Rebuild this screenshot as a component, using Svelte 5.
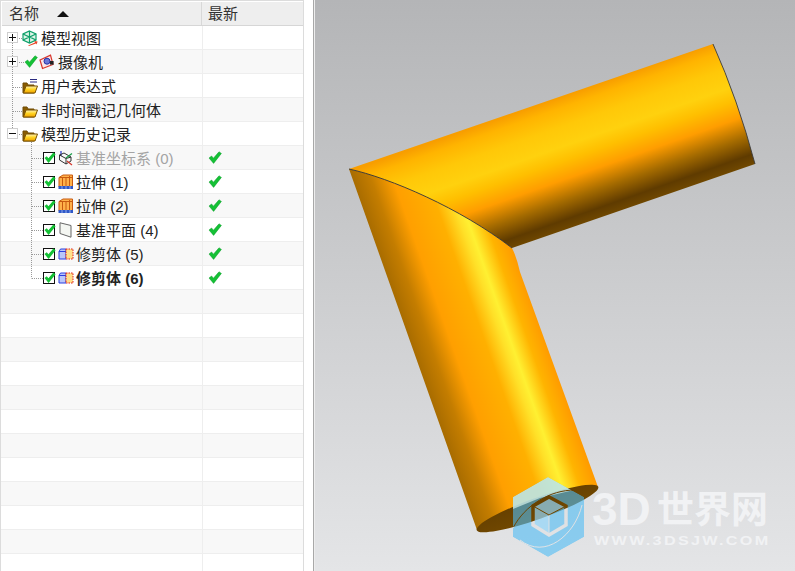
<script>
  const rows = [
    { label: '模型视图', exp: '+', icon: 'cube' },
    { label: '摄像机', exp: '+', icon: 'camera', tick: true },
    { label: '用户表达式', icon: 'folderlist' },
    { label: '非时间戳记几何体', icon: 'folder' },
    { label: '模型历史记录', exp: '-', icon: 'folder' },
    { label: '基准坐标系 (0)', child: true, icon: 'csys', muted: true, latest: true },
    { label: '拉伸 (1)', child: true, icon: 'extrude', latest: true },
    { label: '拉伸 (2)', child: true, icon: 'extrude', latest: true },
    { label: '基准平面 (4)', child: true, icon: 'plane', latest: true },
    { label: '修剪体 (5)', child: true, icon: 'trim', latest: true },
    { label: '修剪体 (6)', child: true, icon: 'trim', latest: true, bold: true }
  ];
  const empties = Array.from({ length: 12 }, (_, i) => i);
  const childYs = [132, 156, 180, 204, 228, 252];
</script>

{#snippet tick()}
  <svg class="tick" width="14" height="13" viewBox="0 0 14 13">
    <path d="M1 7 L3.6 5 L5.4 7.2 L11 .8 L13.4 2.4 L5.6 12.4 Z" fill="#14c135" stroke="#0f9c2c" stroke-width=".5" />
  </svg>
{/snippet}

{#snippet folder()}
  <svg class="ic" width="16" height="16" viewBox="0 0 16 16">
    <path d="M1 5 L1 15 L12 15 L12 7 L6 7 L5 5 Z" fill="#8a5c00" stroke="#6e4a05" stroke-width="1" />
    <path d="M1.5 15 L4 8 L15.5 8 L13 15 Z" fill="url(#folderFill)" stroke="#7a5200" stroke-width="1" />
  </svg>
{/snippet}

<div class="app">
  <svg class="defs" width="0" height="0">
    <defs>
      <linearGradient id="folderFill" x1="0" y1="0" x2="0" y2="1">
        <stop offset="0" stop-color="#fff3b8" />
        <stop offset=".5" stop-color="#ffd21f" />
        <stop offset="1" stop-color="#f0a000" />
      </linearGradient>
    </defs>
  </svg>
  <section class="panel">
    <div class="table">
      <header class="head">
        <div class="hname">名称<span class="sort"></span></div>
        <div class="hlatest">最新</div>
      </header>
      <div class="body">
        <svg class="lines" width="60" height="270" viewBox="0 0 60 270">
          <g stroke="#9a9a9a" stroke-dasharray="1 1" fill="none">
            <path d="M12.5 17 V104" />
            <path d="M17 12.5 H22 M17 36.5 H24 M13 61.5 H22 M13 85.5 H22 M17 108.5 H22" />
            <path d="M31.5 116 V252.5" />
            {#each childYs as y}
              <path d="M32 {y + .5} H43" />
            {/each}
          </g>
        </svg>
        {#each rows as r}
          <div class="row">
            <div class="name" class:child={r.child} class:top={r.exp}>
              {#if r.exp}
                <span class="exp"><i class="h"></i>{#if r.exp === '+'}<i class="v"></i>{/if}</span>
              {/if}
              {#if r.tick}
                <span class="rowtick">{@render tick()}</span>
              {/if}
              {#if r.child}
                <span class="box">
                  <svg width="13" height="12" viewBox="0 0 13 12"><path d="M1.5 6 L3.8 4.2 L5.4 6.2 L10.4 .6 L12.6 2.2 L5.6 11 Z" fill="#14c135" /></svg>
                </span>
              {/if}
              {#if r.icon === 'cube'}
                <svg class="ic" width="16" height="16" viewBox="0 0 16 16">
                  <g fill="none" stroke="#0fa06a" stroke-width="1.2">
                    <path d="M7.5 1 L14 4 V10 L7.5 13 L1 10 V4 Z" fill="#dff5e8" />
                    <path d="M1 4 L7.5 7 L14 4 M7.5 7 V13 M1 10 L7.5 7 L14 10 M7.5 1 V7" />
                  </g>
                  <path d="M6 15.4 L13 12.5 L12.4 11 L15.6 11.6 L14.6 14.6 L14 13.4 L7 16 Z" fill="#e8452a" />
                </svg>
              {:else if r.icon === 'camera'}
                <svg class="ic" width="16" height="16" viewBox="0 0 16 16">
                  <path d="M1 6 L11.5 1.2 L14 10.5 L3.5 14.5 Z" fill="#fbe6e6" stroke="#d8362c" stroke-width="1.2" />
                  <circle cx="8" cy="7.2" r="3" fill="#6a78d8" stroke="#2431a8" />
                  <rect x="11" y="7" width="3.6" height="3.6" fill="#222" />
                </svg>
              {:else if r.icon === 'folderlist'}
                <span class="flist">
                  {@render folder()}
                  <svg class="bars" width="8" height="4" viewBox="0 0 8 4"><path d="M0 .5 H7 M0 3 H7" stroke="#2a2a80" /></svg>
                </span>
              {:else if r.icon === 'folder'}
                {@render folder()}
              {:else if r.icon === 'csys'}
                <svg class="ic" width="16" height="16" viewBox="0 0 16 16">
                  <path d="M3 1 V6" stroke="#2233cc" stroke-width="1.2" />
                  <path d="M1.5 5 L8 8.5 V14 L1.5 10 Z M1.5 5 L6 3 L13 7 L8 8.5 M13 7 V11 L8 14" fill="none" stroke="#333" />
                  <path d="M8 8 L14 3.5" stroke="#1ca04a" stroke-width="1.3" />
                  <path d="M9 11 L14 15" stroke="#d6352a" stroke-width="1.3" />
                </svg>
              {:else if r.icon === 'extrude'}
                <svg class="ic" width="16" height="16" viewBox="0 0 16 16">
                  <path d="M1 3.5 L5 1 L14.5 1 V13 H1 Z" fill="#ffb14a" stroke="#c85a10" />
                  <path d="M4.5 3 V13 M8 3 V13 M11.5 2 V13 M1 3.5 H14.5" stroke="#c85a10" fill="none" />
                  <path d="M.5 12 H15 V15 H.5 Z" fill="#2f58c8" />
                  <path d="M4 12 V15 M8 12 V15 M12 12 V15" stroke="#8fa8e8" />
                </svg>
              {:else if r.icon === 'plane'}
                <svg class="ic" width="16" height="16" viewBox="0 0 16 16">
                  <path d="M2 .8 L13 3.5 V15.2 L2 11.5 Z" fill="#f4f6f2" stroke="#666" />
                </svg>
              {:else if r.icon === 'trim'}
                <svg class="ic" width="16" height="16" viewBox="0 0 16 16">
                  <path d="M1 5.5 L2.5 3 H8 V13 H1 Z" fill="#b9c6fa" stroke="#2a3fe0" />
                  <path d="M1 5.5 H8" stroke="#2a3fe0" />
                  <path d="M8 3 H15 V13 H8 Z" fill="#ffdf8a" stroke="#e02020" stroke-dasharray="1.5 1" />
                </svg>
              {/if}
              <span class="label" class:muted={r.muted} class:bold={r.bold}>{r.label}</span>
            </div>
            <div class="latest">
              {#if r.latest}{@render tick()}{/if}
            </div>
          </div>
        {/each}
        {#each empties as e (e)}
          <div class="row"><div class="name"></div><div class="latest"></div></div>
        {/each}
      </div>
    </div>
  </section>

  <div class="sash"></div>

  <main class="view">
    <svg class="scene" width="480" height="571" viewBox="315 0 480 571">
      <defs>
        <linearGradient id="armA" gradientUnits="userSpaceOnUse" x1="713" y1="44" x2="755" y2="164">
          <stop offset="0" stop-color="#f89e00" />
          <stop offset=".08" stop-color="#ffb400" />
          <stop offset=".22" stop-color="#ffc808" />
          <stop offset=".37" stop-color="#ffd10e" />
          <stop offset=".48" stop-color="#ffbf00" />
          <stop offset=".62" stop-color="#ff9d00" />
          <stop offset=".78" stop-color="#a36a00" />
          <stop offset=".92" stop-color="#5f3b00" />
          <stop offset="1" stop-color="#704800" />
        </linearGradient>
        <linearGradient id="armB" gradientUnits="userSpaceOnUse" x1="477" y1="530" x2="598" y2="487">
          <stop offset="0" stop-color="#a86c00" />
          <stop offset=".14" stop-color="#c47d00" />
          <stop offset=".3" stop-color="#ff9f00" />
          <stop offset=".55" stop-color="#ffb000" />
          <stop offset=".68" stop-color="#ffe028" />
          <stop offset=".74" stop-color="#fff032" />
          <stop offset=".87" stop-color="#ffb400" />
          <stop offset="1" stop-color="#ff9a00" />
        </linearGradient>
        <linearGradient id="cap" gradientUnits="userSpaceOnUse" x1="0" y1="485" x2="0" y2="530">
          <stop offset="0" stop-color="#5f3b00" />
          <stop offset="1" stop-color="#774c00" />
        </linearGradient>
        <mask id="logoMask" maskUnits="userSpaceOnUse" x="505" y="470" width="90" height="95">
          <rect x="505" y="470" width="90" height="95" fill="#000" />
          <path d="M548 477 L584 497 V537 L548 557 L513 537 V497 Z" fill="#fff" />
          <path d="M533 506 L549 497 L566 506 V525 L549 535 L533 525 Z" fill="none" stroke="#000" stroke-width="3.5" />
          <path d="M533 506 L549 515 L566 506 M549 515 V535" fill="none" stroke="#000" stroke-width="1" />
          <path d="M513 528 C525 505 550 490 575 490 M520 540 C545 560 575 535 582 505" fill="none" stroke="#000" stroke-width="1" />
        </mask>
      </defs>

      <path d="M349 169 L713 44 Q738 100 755 164 L512 248 C460 208 390 178 349 169 Z" fill="url(#armA)" />
      <path d="M713 44 Q738 100 755 164" fill="none" stroke="#3a3a3a" stroke-width=".9" />
      <path d="M349 169 C390 178 460 208 512 248 Q517 258 520 272 L598 487 L477 530 Z" fill="url(#armB)" />
      <path d="M349 169 C390 178 460 208 512 248" fill="none" stroke="#333" stroke-width=".9" />
      <ellipse cx="537.5" cy="508.5" rx="64.5" ry="10.5" transform="rotate(-19.6 537.5 508.5)" fill="url(#cap)" />

      <g mask="url(#logoMask)">
        <path d="M548 477 L584 497 V537 L548 557 L513 537 V497 Z" fill="#4fbcf5" opacity=".6" />
        <path d="M513 497 L548 477 L572 490.5 L540 498 L513 509 Z" fill="#d4f0e8" opacity=".72" />
        <path d="M533 506 L549 497 L566 506 L549 515 Z M533 506 L549 515 V535 L533 525 Z" fill="#fff" opacity=".28" />
      </g>

      <text y="525" class="wm"><tspan x="592" class="wmlatin">3D</tspan><tspan x="657" y="523">世界网</tspan></text>
      <text transform="translate(594 545) scale(1.35 1)" class="wm2" textLength="129">WWW.3DSJW.COM</text>
    </svg>
  </main>
</div>

<style>
  :global(body) {
    margin: 0;
    background: #fff;
  }
  .defs {
    position: absolute;
  }
  .app {
    display: flex;
    width: 795px;
    height: 571px;
    overflow: hidden;
    background: #fff;
    font-family: "Liberation Sans", "Noto Sans CJK SC", sans-serif;
    font-size: 15px;
    color: #222;
  }
  .panel {
    width: 304px;
    flex: none;
    box-sizing: border-box;
    border-top: 1px solid #dcdcdc;
    border-left: 1px solid #dcdcdc;
    border-right: 1px solid #dcdcdc;
    padding: 1px 0 0 1px;
    overflow: hidden;
  }
  .head {
    display: grid;
    grid-template-columns: 200px 1fr;
    height: 23px;
    background: #eeeeee;
    border-bottom: 1px solid #d6d6d6;
    line-height: 23px;
    color: #333;
  }
  .hname {
    padding-left: 7px;
    border-right: 1px solid #d8d8d8;
    display: flex;
    align-items: center;
  }
  .hlatest {
    padding-left: 6px;
  }
  .sort {
    width: 0;
    height: 0;
    margin-left: 18px;
    border-left: 6px solid transparent;
    border-right: 6px solid transparent;
    border-bottom: 6px solid #111;
  }
  .body {
    position: relative;
    margin-left: -2px;
  }
  .lines {
    position: absolute;
    left: 0;
    top: 0;
    z-index: 1;
  }
  .row {
    display: grid;
    grid-template-columns: 203px 1fr;
    height: 23px;
    border-bottom: 1px solid #eeeeee;
    background: #fff;
  }
  .row:nth-child(odd) {
    background: #f8f8f8;
  }
  .name {
    display: flex;
    align-items: center;
    gap: 4px;
    padding-left: 22px;
    border-right: 1px solid #eeeeee;
    position: relative;
  }
  .name.top {
    padding-left: 7px;
  }
  .name.child {
    padding-left: 43px;
    gap: 3px;
  }
  .exp {
    position: relative;
    width: 9px;
    height: 9px;
    flex: none;
    border: 1px solid #cfcfcf;
    background: #fff;
    z-index: 2;
  }
  .exp .h {
    position: absolute;
    left: 1px;
    top: 4px;
    width: 7px;
    height: 1px;
    background: #111;
  }
  .exp .v {
    position: absolute;
    left: 4px;
    top: 1px;
    width: 1px;
    height: 7px;
    background: #111;
  }
  .rowtick {
    display: flex;
    margin-left: 2px;
    margin-right: -3px;
  }
  .box {
    display: flex;
    width: 10px;
    height: 10px;
    flex: none;
    border: 1px solid #111;
    background: #fff;
    align-items: center;
    justify-content: center;
  }
  .box svg {
    flex: none;
    overflow: visible;
  }
  .ic {
    display: block;
    flex: none;
  }
  .flist {
    position: relative;
    display: block;
    width: 16px;
    height: 16px;
    flex: none;
  }
  .bars {
    position: absolute;
    left: 8px;
    top: 1px;
  }
  .label {
    white-space: pre;
    position: relative;
    z-index: 2;
    margin-left: -1px;
  }
  .muted {
    color: #a4a4a4;
  }
  .bold {
    font-weight: 700;
  }
  .latest {
    display: flex;
    align-items: center;
    padding-left: 5px;
  }
  .tick {
    display: block;
  }
  .sash {
    width: 10px;
    flex: none;
    box-sizing: border-box;
    border-right: 1px solid #a8a8a8;
  }
  .view {
    flex: 1;
    border-left: 1px solid #ededed;
    background: linear-gradient(180deg, #b4b5b7 0%, #e4e5e7 100%);
    overflow: hidden;
  }
  .scene {
    display: block;
  }
  .wm {
    font-family: "Noto Sans CJK SC", sans-serif;
    font-weight: 700;
    font-size: 37px;
    fill: #f1f2f4;
  }
  .wmlatin {
    font-family: "Liberation Sans", sans-serif;
    font-size: 46px;
  }
  .wm2 {
    font-family: "Liberation Sans", sans-serif;
    font-weight: 700;
    font-size: 12px;
    fill: #f1f2f4;
  }
</style>
